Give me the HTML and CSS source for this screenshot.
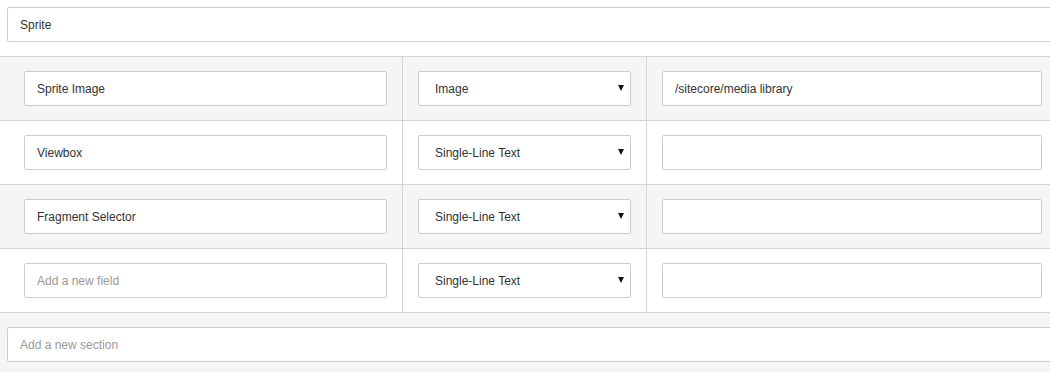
FILE: index.html
```html
<!DOCTYPE html>
<html lang="en">
<head>
    <meta charset="UTF-8">
    <title>Template fields</title>
    <link rel="stylesheet" href="styles.css">
</head>
<body>
    <div class="page">
        <div class="section-name">
            <input type="text" class="field" value="Sprite">
        </div>
        <div class="rows">
            <div class="row">
                <div class="cell name"><input type="text" class="field" value="Sprite Image"></div>
                <div class="cell type">
                    <div class="select-wrap">
                        <select class="field select"><option>Image</option></select>
                    </div>
                </div>
                <div class="cell source"><input type="text" class="field" value="/sitecore/media library"></div>
            </div>
            <div class="row">
                <div class="cell name"><input type="text" class="field" value="Viewbox"></div>
                <div class="cell type">
                    <div class="select-wrap">
                        <select class="field select"><option>Single-Line Text</option></select>
                    </div>
                </div>
                <div class="cell source"><input type="text" class="field"></div>
            </div>
            <div class="row">
                <div class="cell name"><input type="text" class="field" value="Fragment Selector"></div>
                <div class="cell type">
                    <div class="select-wrap">
                        <select class="field select"><option>Single-Line Text</option></select>
                    </div>
                </div>
                <div class="cell source"><input type="text" class="field"></div>
            </div>
            <div class="row">
                <div class="cell name"><input type="text" class="field" placeholder="Add a new field"></div>
                <div class="cell type">
                    <div class="select-wrap">
                        <select class="field select"><option>Single-Line Text</option></select>
                    </div>
                </div>
                <div class="cell source"><input type="text" class="field"></div>
            </div>
        </div>
        <div class="new-section">
            <input type="text" class="field" placeholder="Add a new section">
        </div>
    </div>
</body>
</html>
```

FILE: styles.css
```css
html,body{margin:0;padding:0;overflow:hidden;}
body{
    font-family: "Liberation Sans", Arial, sans-serif;
    font-size:12px;
    color:#333;
    background-color:#f5f5f5;
}

.page{
    width:1057px;
}

.field{
    display:block;
    box-sizing:border-box;
    width:100%;
    height:35px;
    margin:0;
    padding:0 12px;
    border:1px solid #ccc;
    border-radius:2px;
    background-color:#fff;
    color:#333;
    font-family: inherit;
    font-size:12px;
    outline:none;
}
.field::placeholder{
    color:#999;
}

.section-name{
    padding:7px 0 14px 7px;
    background-color:#fff;
}

.rows .row{
    display:grid;
    grid-template-columns:403px 244px 1fr;
    border-top:1px solid #d4d4d4;
    background-color:#fff;
}
.rows .row:nth-child(odd){
    background-color:#f5f5f5;
}
.rows .row:last-child{
    border-bottom:1px solid #d4d4d4;
}
.rows .cell{
    padding:14px 15px;
    border-right:1px solid #d4d4d4;
}
.rows .cell.name{
    padding-left:24px;
}
.rows .cell.source{
    border-right:none;
}

.select-wrap{
    position:relative;
}
.select-wrap .select{
    -webkit-appearance:none;
    appearance:none;
    padding-left:16px;
}
.select-wrap::after{
    content:"";
    position:absolute;
    top:14px;
    right:7px;
    border-left:3.5px solid transparent;
    border-right:3.5px solid transparent;
    border-top:6px solid #111;
    pointer-events:none;
}

.new-section{
    padding:14px 0 10px 7px;
}
```
